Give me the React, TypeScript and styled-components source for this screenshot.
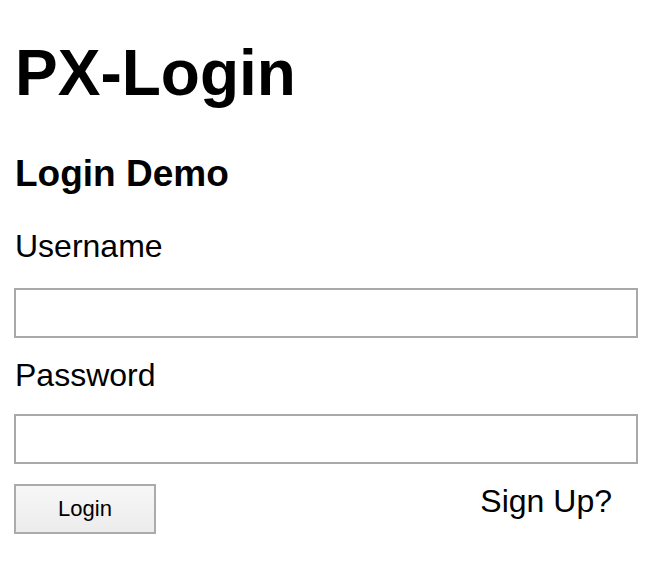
import React from "react";
import styled, { createGlobalStyle } from "styled-components";

const Global = createGlobalStyle`
  html, body { margin: 0; padding: 0; background: #ffffff; }
  body { font-family: "Liberation Sans", Arial, Helvetica, sans-serif; color: #000; }
`;

const Page = styled.div`
  padding: 36px 0 0 14px;
  width: 624px;
  display: flex;
  flex-direction: column;
`;

const Title = styled.h1`
  margin: 0 0 0 1px;
  font-size: 64px;
  line-height: 74px;
  font-weight: 700;
`;

const Subtitle = styled.h2`
  margin: 42px 0 0 1px;
  font-size: 37px;
  line-height: 43px;
  font-weight: 700;
`;

const Form = styled.form`
  margin: 0;
  display: flex;
  flex-direction: column;
`;

const Label = styled.label<{ $top: number }>`
  margin: ${(p) => p.$top}px 0 0 1px;
  font-size: 32px;
  line-height: 37px;
`;

const Input = styled.input<{ $top: number }>`
  box-sizing: border-box;
  margin: ${(p) => p.$top}px 0 0 0;
  width: 624px;
  height: 50px;
  border: 2px solid #a9a9a9;
  background: #fff;
  padding: 0 8px;
  font-size: 28px;
  font-family: inherit;
  outline: none;
`;

const Actions = styled.div`
  margin-top: 20px;
  display: flex;
  justify-content: space-between;
  align-items: flex-start;
  padding-right: 26px;
`;

const Button = styled.button`
  box-sizing: border-box;
  width: 142px;
  height: 50px;
  border: 2px solid #ababab;
  background: linear-gradient(#f7f7f7, #ececec);
  font-family: inherit;
  font-size: 22px;
  color: #000;
  padding: 0;
`;

const SignUp = styled.span`
  font-size: 32px;
  line-height: 37px;
  margin-top: -1px;
`;

export default function App() {
  return (
    <>
      <Global />
      <Page>
        <Title>PX-Login</Title>
        <Subtitle>Login Demo</Subtitle>
        <Form onSubmit={(e) => e.preventDefault()}>
          <Label $top={33} htmlFor="u">Username</Label>
          <Input $top={23} id="u" type="text" />
          <Label $top={19} htmlFor="p">Password</Label>
          <Input $top={20} id="p" type="password" />
          <Actions>
            <Button type="submit">Login</Button>
            <SignUp>Sign Up?</SignUp>
          </Actions>
        </Form>
      </Page>
    </>
  );
}
